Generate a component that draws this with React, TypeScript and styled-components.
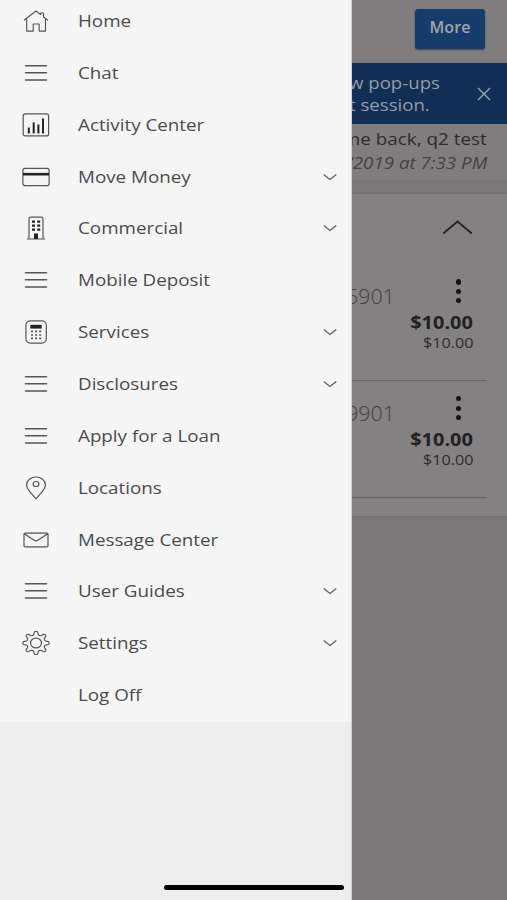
import React from "react";
import styled, { createGlobalStyle } from "styled-components";

const GlobalStyle = createGlobalStyle`
  * { box-sizing: border-box; }
  body {
    margin: 0;
    background: #7c7879;
    font-family: "Open Sans", "Noto Sans", sans-serif;
  }
`;

const Screen = styled.div`
  display: flex;
  width: 507px;
  height: 900px;
  overflow: hidden;
`;

const Drawer = styled.aside`
  display: flex;
  flex-direction: column;
  flex: 0 0 352px;
  background: #eeeeee;
  border-right: 1px solid #d2d1d1;
`;

const Menu = styled.nav`
  margin-top: -4.9px;
  padding-bottom: 0.5px;
  background: #f5f5f5;
`;

const MenuRow = styled.a`
  display: grid;
  grid-template-columns: 72px 1fr 42px;
  align-items: center;
  height: 51.87px;
  color: #4b4b4b;
`;

const IconCell = styled.span`
  display: flex;
  justify-content: center;
  svg { display: block; }
`;

const Label = styled.span`
  padding-left: 6px;
  font-size: 17px;
  line-height: 24px;
  white-space: nowrap;
  transform: scaleX(1.105);
  transform-origin: 6px 50%;
`;

const HomeBar = styled.div`
  width: 180px;
  height: 5.6px;
  margin: auto 7px 9.8px auto;
  border-radius: 3px;
  background: #000;
`;

const Page = styled.main`
  flex: 1;
  min-width: 0;
  overflow: hidden;
  background: #7c7879;
  color: #272526;
`;

const TopBar = styled.header`
  display: flex;
  justify-content: flex-end;
  height: 63px;
  padding: 9px 22px 0 0;
  background: #807d7e;
`;

const MoreButton = styled.button`
  width: 70px;
  height: 39.5px;
  padding: 0 0 3px;
  border: 0;
  border-radius: 3px;
  background: #163c6c;
  box-shadow: 0 1px 2px rgba(0, 0, 0, 0.45);
  color: #a0a3aa;
  font: 600 16px/22px "Open Sans", sans-serif;
  letter-spacing: 0.1px;
`;

const Banner = styled.div`
  display: flex;
  justify-content: space-between;
  align-items: center;
  height: 61.3px;
  padding-right: 16px;
  background: #112e55;
  color: #959ba5;
`;

const BannerText = styled.div`
  margin-left: -3.5px;
  font-size: 17px;
  line-height: 22px;
  white-space: pre;
  transform: scaleX(1.095);
  transform-origin: 0 50%;
`;

const Welcome = styled.section`
  display: flex;
  flex-direction: column;
  align-items: flex-end;
  height: 55.7px;
  padding: 3.2px 20px 0 0;
  background: #807d7e;
`;

const WelcomeLine = styled.div<{ $soft?: boolean }>`
  flex: none;
  font-size: ${(p) => (p.$soft ? 16.5 : 17)}px;
  font-style: ${(p) => (p.$soft ? "italic" : "normal")};
  line-height: 23.5px;
  color: ${(p) => (p.$soft ? "#454243" : "#2d2a2b")};
  white-space: nowrap;
  transform: scaleX(${(p) => (p.$soft ? 1.135 : 1.11)});
  transform-origin: 100% 50%;
`;

const Accounts = styled.section`
  height: 322px;
  margin-top: 14px;
  padding-right: 20px;
  background: #848182;
  box-shadow: 0 0 3px rgba(80, 76, 78, 0.35);
`;

const GroupHead = styled.div`
  display: flex;
  justify-content: flex-end;
  height: 70px;
  padding: 25.5px 14px 0 0;
`;

const Account = styled.article`
  display: flex;
  justify-content: space-between;
  height: 116.8px;
  padding: 15.4px 12.5px 0 0;
  border-bottom: 1px solid #646162;
`;

const AccountNumber = styled.div`
  margin-left: -4px;
  padding-top: 2.6px;
  font-size: 20.5px;
  font-weight: 300;
  line-height: 28px;
  color: #434041;
  transform: scaleX(1.04);
  transform-origin: 100% 50%;
`;

const Balances = styled.div`
  display: flex;
  flex-direction: column;
  align-items: flex-end;
`;

const Dots = styled.span`
  display: flex;
  flex-direction: column;
  gap: 4.2px;
  height: 27.5px;
  margin: 0 13.6px 4px 0;
`;

const Dot = styled.i`
  width: 5.2px;
  height: 5.2px;
  border-radius: 50%;
  background: #161415;
`;

const Amount = styled.span<{ $main?: boolean }>`
  padding-right: 1px;
  font-size: ${(p) => (p.$main ? 17.5 : 14.3)}px;
  font-weight: ${(p) => (p.$main ? 700 : 400)};
  line-height: ${(p) => (p.$main ? 22 : 19)}px;
  color: ${(p) => (p.$main ? "#221f20" : "#2f2c2d")};
  transform: scaleX(${(p) => (p.$main ? 1.14 : 1.13)});
  transform-origin: 100% 50%;
`;

type IconName =
  | "home" | "lines" | "chart" | "card" | "building"
  | "calculator" | "pin" | "mail" | "gear";

const gearPath = (() => {
  const parts: string[] = [];
  const steps = 160;
  for (let i = 0; i < steps; i++) {
    const a = (i / steps) * Math.PI * 2;
    const wave = Math.tanh(2.2 * (Math.cos(a * 8) - 0.15));
    const r = 10.3 + 1.8 * wave;
    const x = 14 + r * 1.09 * Math.cos(a);
    const y = 12 + r * 0.96 * Math.sin(a);
    parts.push(`${i ? "L" : "M"}${x.toFixed(2)} ${y.toFixed(2)}`);
  }
  return parts.join("") + "Z";
})();

const drawings: Record<IconName, React.ReactNode> = {
  home: (
    <path d="M2 11.3 14 2l4.6 3.5V4h2.9v4l4.5 3.3M4.7 9.5v12.6h6.5V15h6v7.1h6.3V9.5" strokeWidth="1.15" />
  ),
  lines: <path d="M3.5 4.7h21M3.5 11.8h21M3.5 19.1h21" strokeWidth="1.5" strokeLinecap="round" />,
  chart: (
    <>
      <rect x="1.2" y="0.9" width="25.4" height="22" rx="2" />
      <path d="M6.8 20.5v-6M11.7 20.5v-11M16.4 20.5v-9M21 20.5V5.5" stroke="#222" strokeWidth="2" />
    </>
  ),
  card: (
    <>
      <rect x="0.9" y="3.4" width="26.2" height="17.2" rx="2.2" />
      <path d="M1 9.2h26" stroke="#222" strokeWidth="2.6" />
    </>
  ),
  building: (
    <>
      <path d="M4.8 23h18.4M7 23V3.2Q7 1.2 9 1.2h10q2 0 2 2V23" />
      <path d="M10 5.6h3m2.2 0h3m-8.2 4h3m2.2 0h3m-8.2 4.1h3m2.2 0h3" stroke="#222" strokeWidth="2.2" />
      <path d="M12 17.5h4V23h-4z" fill="#222" stroke="none" />
    </>
  ),
  calculator: (
    <>
      <rect x="3.9" y="0.9" width="20.4" height="22.2" rx="4.4" />
      <path d="M8.3 4.8h11.4v3.8H8.3z" fill="#222" stroke="none" />
      <path d="M9 11.4h10.5M9 15h10.5M9 18.4h10.5" strokeWidth="1.7" strokeDasharray="2 2.1" />
    </>
  ),
  pin: (
    <>
      <path d="M14 23C11 18.6 4.6 13.8 4.6 9.2 4.6 4.4 8.8 1 14 1s9.4 3.4 9.4 8.2C23.4 13.8 17 18.6 14 23Z" />
      <ellipse cx="14" cy="8" rx="2.9" ry="2.5" />
    </>
  ),
  mail: (
    <>
      <rect x="2" y="5.2" width="24" height="13.6" rx="1" />
      <path d="m2.3 5.8 9.9 6.5q1.8 1.2 3.6 0l9.9-6.5" />
    </>
  ),
  gear: (
    <>
      <path d={gearPath} />
      <ellipse cx="14" cy="12" rx="5.5" ry="4.9" />
    </>
  ),
};

const Icon = ({ name }: { name: IconName }) => (
  <svg width="28" height="24" viewBox="0 0 28 24" fill="none" stroke="#555" strokeWidth="1.2" strokeLinejoin="round">
    {drawings[name]}
  </svg>
);

const Chevron = () => (
  <svg width="14" height="8" viewBox="0 0 14 8" fill="none" stroke="#5c5c5c" strokeWidth="1.2">
    <path d="m.7 1.5 6.3 5 6.3-5" />
  </svg>
);

const items: { label: string; icon?: IconName; expandable?: boolean }[] = [
  { label: "Home", icon: "home" },
  { label: "Chat", icon: "lines" },
  { label: "Activity Center", icon: "chart" },
  { label: "Move Money", icon: "card", expandable: true },
  { label: "Commercial", icon: "building", expandable: true },
  { label: "Mobile Deposit", icon: "lines" },
  { label: "Services", icon: "calculator", expandable: true },
  { label: "Disclosures", icon: "lines", expandable: true },
  { label: "Apply for a Loan", icon: "lines" },
  { label: "Locations", icon: "pin" },
  { label: "Message Center", icon: "mail" },
  { label: "User Guides", icon: "lines", expandable: true },
  { label: "Settings", icon: "gear", expandable: true },
  { label: "Log Off" },
];

export default function App() {
  return (
    <>
      <GlobalStyle />
      <Screen>
        <Drawer>
          <Menu>
            {items.map(({ label, icon, expandable }) => (
              <MenuRow key={label}>
                <IconCell>{icon && <Icon name={icon} />}</IconCell>
                <Label>{label}</Label>
                <IconCell>{expandable && <Chevron />}</IconCell>
              </MenuRow>
            ))}
          </Menu>
          <HomeBar />
        </Drawer>
        <Page>
          <TopBar>
            <MoreButton>More</MoreButton>
          </TopBar>
          <Banner>
            <BannerText>{"w pop-ups\nt session."}</BannerText>
            <svg width="14" height="14" viewBox="0 0 14 14" stroke="#a0a5ad" strokeWidth="1.4">
              <path d="m1 1 12 12M13 1 1 13" />
            </svg>
          </Banner>
          <Welcome>
            <WelcomeLine>me back, q2 test</WelcomeLine>
            <WelcomeLine $soft>/2019 at 7:33 PM</WelcomeLine>
          </Welcome>
          <Accounts>
            <GroupHead>
              <svg width="31" height="16" viewBox="0 0 31 16" fill="none" stroke="#252223" strokeWidth="1.8">
                <path d="m1.2 14.5 14.3-12 14.3 12" />
              </svg>
            </GroupHead>
            {["5901", "9901"].map((number) => (
              <Account key={number}>
                <AccountNumber>{number}</AccountNumber>
                <Balances>
                  <Dots><Dot /><Dot /><Dot /></Dots>
                  <Amount $main>$10.00</Amount>
                  <Amount>$10.00</Amount>
                </Balances>
              </Account>
            ))}
          </Accounts>
        </Page>
      </Screen>
    </>
  );
}
